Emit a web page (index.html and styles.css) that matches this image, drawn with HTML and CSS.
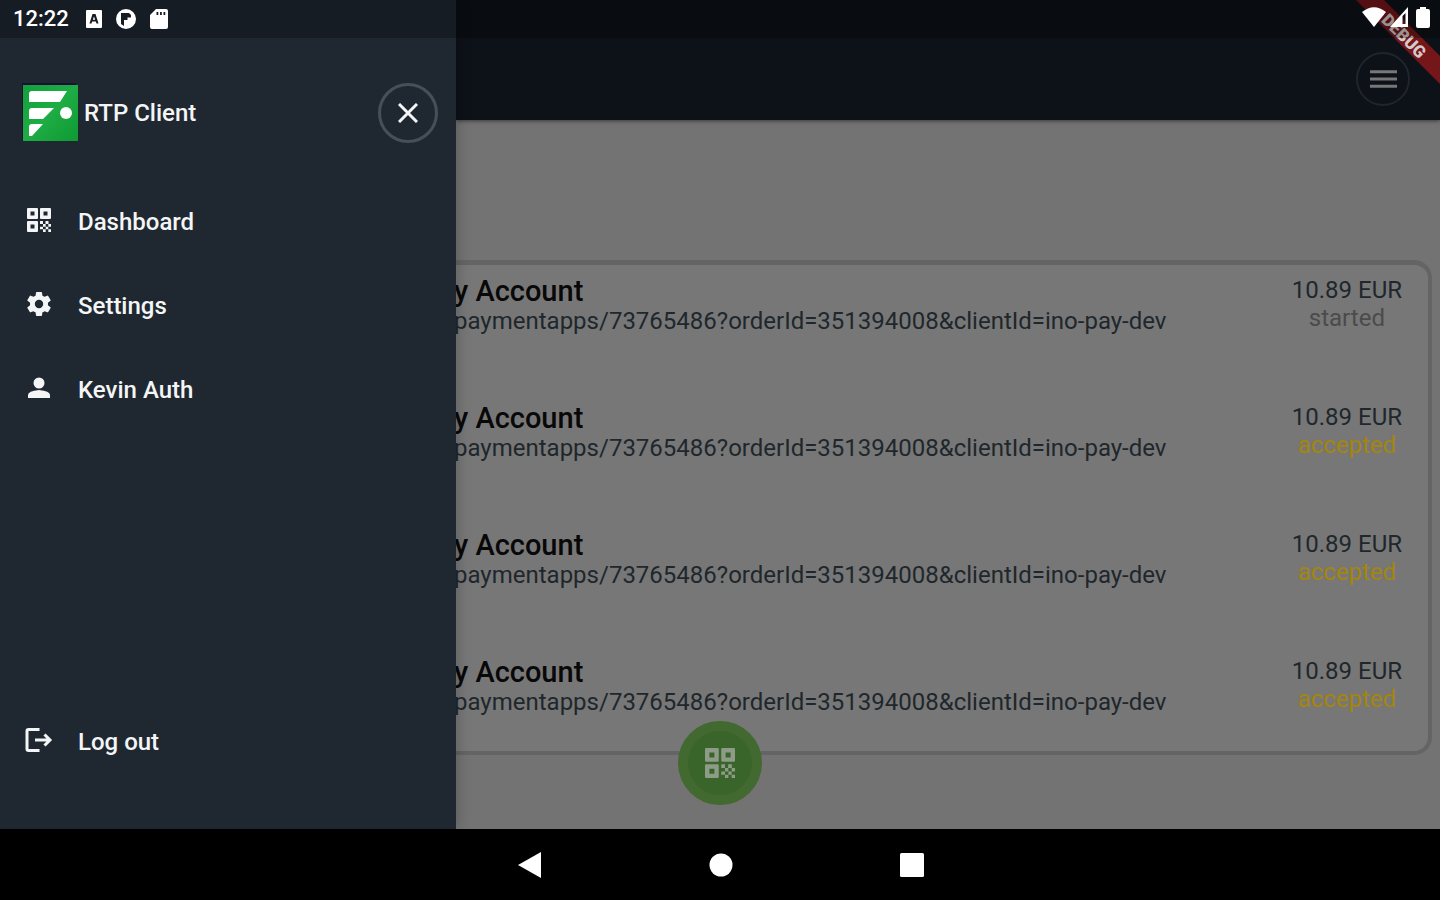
FILE: index.html
```html
<!DOCTYPE html>
<html lang="en">
<head>
<meta charset="utf-8">
<meta name="viewport" content="width=device-width, initial-scale=1">
<title>RTP Client</title>
<link rel="stylesheet" href="styles.css">
</head>
<body>
<svg class="defs" aria-hidden="true">
  <symbol id="qr" viewBox="0 0 24 24">
    <path fill-rule="evenodd" d="M1 0h9q1 0 1 1v9q0 1-1 1H1q-1 0-1-1V1q0-1 1-1zM3.500 3.500v4h4v-4zM14 0h9q1 0 1 1v9q0 1-1 1h-9q-1 0-1-1V1q0-1 1-1zM16.500 3.500v4h4v-4zM1 13h9q1 0 1 1v9q0 1-1 1H1q-1 0-1-1v-9q0-1 1-1zM3.500 16.500v4h4v-4z"/>
    <path d="M13 13h3v3h-3zM18.500 13h3v3h-3zM16 16h2.700v2.700H16zM21.300 16H24v2.700h-2.700zM13 18.700h3v2.600h-3zM18.700 18.700h2.600v2.600h-2.600zM16 21.300h2.700V24H16zM21.300 21.300H24V24h-2.700z"/>
  </symbol>
</svg>
<div class="device">
  <div class="screen">
    <header class="status">
      <div class="status-group">
        <time class="clock">12:22</time>
        <svg class="ic-app" viewBox="0 0 16 18"><path fill-rule="evenodd" d="M1 0h14q1 0 1 1v16q0 1-1 1H1q-1 0-1-1V1q0-1 1-1zM6.500 4L3.500 13.500h2l.7-2h3.600l.7 2h2L9.500 4zM8 6.500l1.200 3.300H6.800z"/></svg>
        <svg class="ic-round" viewBox="0 0 22 22"><path fill-rule="evenodd" d="M11 1a10 10 0 1 1 0 20a10 10 0 1 1 0-20zM6 5v11l3 2v-6h3.500V9.500H16V7l-2-2z"/></svg>
        <svg class="ic-sd" viewBox="0 0 18 20"><path fill-rule="evenodd" d="M6 0h10q2 0 2 2v16q0 2-2 2H2q-2 0-2-2V6zM6.500 3v3h1.800V3zM10 3v3h1.800V3zM13.500 3v3h1.800V3z"/></svg>
      </div>
      <div class="status-group signals">
        <svg class="ic-wifi" viewBox="0 0 24 20"><path d="M0 5Q12-4.500 24 5L12 20z"/></svg>
        <svg class="ic-cell" viewBox="0 0 18 20"><path fill-rule="evenodd" d="M18 0v20H0zM15.500 6v11h-3V9z"/></svg>
        <svg class="ic-batt" viewBox="0 0 14 21"><path d="M4 0h6v2h2q2 0 2 2v15q0 2-2 2H2q-2 0-2-2V4q0-2 2-2h2z"/></svg>
      </div>
    </header>
    <aside class="drawer">
      <div class="drawer-head">
        <svg class="logo" viewBox="0 0 56 58">
          <defs><linearGradient id="lg" x1="0" y1="0" x2="1" y2="1"><stop offset="0" stop-color="#12a03c"/><stop offset=".5" stop-color="#1eac44"/><stop offset="1" stop-color="#0f9a33"/></linearGradient></defs>
          <path fill="#1b0f38" d="M0 0h54v3H2v55H0z"/>
          <path fill="url(#lg)" d="M1 2h55v56H1z"/>
          <path fill="#fff" d="M7 11q0-3 3-3h35l-7 11H7zM7 28q0-3 3-3h22L21 36H7zM7 44q0-3 3-3h11L10 53H7z"/>
          <circle fill="#fff" cx="44" cy="30" r="6"/>
        </svg>
        <h1 class="brand">RTP Client</h1>
        <button class="round close" type="button" aria-label="Close menu">
          <svg viewBox="0 0 20 20"><path d="M1 1l18 18M19 1L1 19"/></svg>
        </button>
      </div>
      <nav class="menu">
        <a class="item" href="#"><svg class="item-ic"><use href="#qr"/></svg>Dashboard</a>
        <a class="item" href="#"><svg class="item-ic" viewBox="2 2 20 20"><path fill-rule="evenodd" d="M19.430 12.980c.040-.320.070-.640.070-.980s-.030-.660-.070-.980l2.110-1.650c.190-.150.240-.420.120-.640l-2-3.460c-.120-.220-.390-.300-.610-.220l-2.490 1c-.520-.400-1.080-.730-1.690-.980l-.380-2.650C14.460 2.180 14.250 2 14 2h-4c-.250 0-.460.180-.490.420l-.380 2.650c-.610.250-1.170.590-1.690.980l-2.490-1c-.230-.090-.490 0-.610.220l-2 3.460c-.130.220-.070.490.120.640l2.110 1.650c-.040.320-.070.650-.070.980s.030.660.070.980l-2.110 1.650c-.190.150-.240.420-.120.640l2 3.460c.120.220.390.300.610.220l2.490-1c.520.400 1.080.730 1.690.980l.380 2.650c.030.240.240.420.490.420h4c.250 0 .460-.180.490-.420l.380-2.650c.610-.250 1.170-.590 1.690-.980l2.490 1c.230.090.490 0 .610-.220l2-3.460c.120-.220.070-.490-.120-.640l-2.110-1.650zM12 15.500a3.500 3.500 0 1 1 0-7a3.500 3.500 0 0 1 0 7z"/></svg>Settings</a>
        <a class="item" href="#"><svg class="item-ic" viewBox="0 0 24 24"><circle cx="12" cy="7" r="5.500"/><path d="M1 22v-3q0-4 11-5q11 1 11 5v3z"/></svg>Kevin Auth</a>
        <a class="item logout" href="#"><svg class="item-ic line" viewBox="0 0 24 24"><path d="M12.500 1.500H1.500Q0 1.500 0 3v18q0 1.500 1.500 1.500h11M8 12h14M17.500 6.500L23 12l-5.500 5.500"/></svg>Log out</a>
      </nav>
    </aside>
    <div class="page">
      <div class="appbar">
        <button class="round burger" type="button" aria-label="Open menu">
          <svg viewBox="0 0 28 20"><path d="M0 2.500h28M0 10h28M0 17.500h28"/></svg>
        </button>
      </div>
      <main class="content">
        <ul class="card">
          <li class="row"><div class="info"><h2 class="title">y Account</h2><p class="url">paymentapps/73765486?orderId=351394008&amp;clientId=ino-pay-dev</p></div><div class="sum"><p>10.89 EUR</p><p class="started">started</p></div></li>
          <li class="row"><div class="info"><h2 class="title">y Account</h2><p class="url">paymentapps/73765486?orderId=351394008&amp;clientId=ino-pay-dev</p></div><div class="sum"><p>10.89 EUR</p><p class="accepted">accepted</p></div></li>
          <li class="row"><div class="info"><h2 class="title">y Account</h2><p class="url">paymentapps/73765486?orderId=351394008&amp;clientId=ino-pay-dev</p></div><div class="sum"><p>10.89 EUR</p><p class="accepted">accepted</p></div></li>
          <li class="row"><div class="info"><h2 class="title">y Account</h2><p class="url">paymentapps/73765486?orderId=351394008&amp;clientId=ino-pay-dev</p></div><div class="sum"><p>10.89 EUR</p><p class="accepted">accepted</p></div></li>
        </ul>
      </main>
    </div>
    <button class="fab" type="button" aria-label="Scan code"><svg><use href="#qr"/></svg></button>
    <svg class="ribbon" viewBox="0 0 84 84"><path fill="#75161a" d="M0 0h28l56 56v28z"/><text transform="translate(48 36) rotate(45)" y="6" text-anchor="middle">DEBUG</text></svg>
  </div>
  <footer class="navbar">
    <button type="button" aria-label="Back"><svg viewBox="0 0 24 26"><path d="M0 13L23 0v26z"/></svg></button>
    <button type="button" aria-label="Home"><svg viewBox="0 0 24 24"><circle cx="12" cy="12" r="11.500"/></svg></button>
    <button type="button" aria-label="Recent apps"><svg viewBox="0 0 24 24"><rect width="24" height="24" rx="1.500"/></svg></button>
  </footer>
</div>
</body>
</html>
```
FILE: styles.css
```css
* { box-sizing: border-box; }
body, h1, h2, p, ul { margin: 0; padding: 0; }
body { font-family: Roboto, "Liberation Sans", sans-serif; background: #000; }
button { display: flex; align-items: center; justify-content: center; padding: 0; border: 0; background: none; }
svg { display: block; flex: none; }
.defs { position: absolute; width: 0; height: 0; }

.device { min-height: 100vh; display: flex; flex-direction: column; }
.screen { position: relative; flex: 1; display: flex; overflow: hidden; }

.status {
  position: absolute; z-index: 4; top: 0; left: 0; right: 0; height: 38px;
  padding: 0 10px 0 13px;
  display: flex; align-items: center; justify-content: space-between;
  background: rgba(0, 0, 0, .28); color: #fff; fill: #fff;
}
.status-group { display: flex; align-items: center; gap: 13px; }
.clock { font-size: 22px; line-height: 38px; font-weight: 500; margin-right: 4px; }
.ic-app { width: 16px; height: 18px; }
.ic-round { width: 22px; height: 22px; }
.ic-sd { width: 18px; height: 20px; }
.signals { gap: 4px; padding-bottom: 4px; }
.ic-wifi { width: 24px; height: 20px; }
.ic-cell { width: 18px; height: 20px; margin-right: 4px; }
.ic-batt { width: 14px; height: 21px; }

.drawer {
  position: relative; z-index: 2; flex: none; width: 456px;
  padding: 83px 18px 45px 22px;
  display: flex; flex-direction: column;
  background: #1f2831; color: #f4f5f6; box-shadow: 2px 0 12px rgba(0, 0, 0, .2);
}
.drawer-head { display: flex; align-items: center; height: 60px; margin-bottom: 37px; }
.logo { width: 56px; height: 58px; margin-bottom: 2px; }
.brand { flex: 1; margin-left: 6px; font-size: 24px; line-height: 28px; font-weight: 500; }
.round { border-radius: 50%; border-style: solid; fill: none; }
.close { width: 60px; height: 60px; border-width: 3px; border-color: #46505a; }
.close svg { width: 20px; height: 20px; stroke: #f4f5f6; stroke-width: 3; }
.menu { flex: 1; display: flex; flex-direction: column; }
.item {
  display: flex; align-items: center; gap: 27px; height: 84px; padding-left: 5px;
  color: inherit; fill: #f4f5f6; text-decoration: none; font-size: 24px; font-weight: 500;
}
.item-ic { width: 24px; height: 24px; margin-bottom: 4px; }
.line { fill: none; stroke: #f4f5f6; stroke-width: 3; overflow: visible; }
.logout { margin-top: auto; }

.page { flex: 1; min-width: 0; display: flex; flex-direction: column; background: #737373; }
.appbar {
  height: 120px; padding: 38px 30px 0 0;
  display: flex; align-items: center; justify-content: flex-end;
  background: #0d1118; box-shadow: 0 1px 4px rgba(0, 0, 0, .5);
}
.burger { width: 54px; height: 54px; border-width: 2px; border-color: #20242b; }
.burger svg { width: 27px; height: 20px; stroke: #777; stroke-width: 3; }
.content { flex: 1; padding: 140px 8px 73px 0; }
.card {
  list-style: none; padding: 10px 26px 35px 0;
  display: flex; flex-direction: column; gap: 67px;
  background: #777; border: 4px solid #646464; border-top-width: 5px; border-left: 0; border-radius: 0 18px 18px 0;
}
.row { display: flex; justify-content: space-between; color: #20272c; font-size: 24px; line-height: 28px; }
.info { margin-left: -2px; }
.title { font-size: 29px; line-height: 32px; font-weight: 500; color: #080808; }
.sum { padding-top: 1px; text-align: center; }
.started { color: #4b4b4b; }
.accepted { color: #a3850f; }

.fab {
  position: absolute; z-index: 3; left: calc(50% - 42px); bottom: 24px;
  width: 84px; height: 84px; border-radius: 50%; border: 10px solid #416930;
  background: #3a652a; fill: #8d9b87;
}
.fab svg { width: 30px; height: 30px; }

.ribbon { position: absolute; z-index: 3; top: 0; right: 0; width: 84px; height: 84px; }
.ribbon text { fill: #d6c9ca; font-size: 17px; font-weight: 900; }

.navbar { height: 71px; padding-left: 2px; display: flex; align-items: center; justify-content: center; gap: 167px; background: #000; }
.navbar svg { width: 24px; height: 26px; fill: #fff; }
```
